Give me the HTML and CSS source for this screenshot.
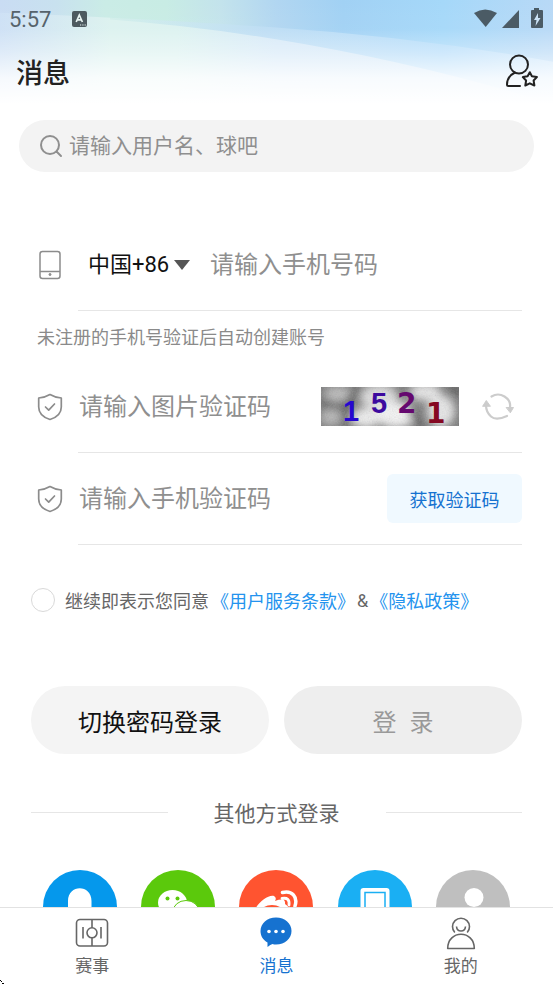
FILE: index.html
```html
<!DOCTYPE html>
<html lang="zh-CN">
<head>
<meta charset="utf-8">
<meta name="viewport" content="width=device-width, initial-scale=1">
<title>消息</title>
<link rel="stylesheet" href="styles.css">
</head>
<body>
<div class="app">
  <header class="header">
    <svg class="header-art" viewBox="0 0 553 106" preserveAspectRatio="none" aria-hidden="true">
      <defs>
        <linearGradient id="hue" x1="0" x2="1" y1="0" y2="0">
          <stop offset="0" stop-color="#c9dcf3"/>
          <stop offset=".1" stop-color="#c8e1ef"/>
          <stop offset=".19" stop-color="#caece6"/>
          <stop offset=".3" stop-color="#c8ece4"/>
          <stop offset=".4" stop-color="#c3e3ec"/>
          <stop offset=".5" stop-color="#b1d6f1"/>
          <stop offset=".62" stop-color="#a1d1f4"/>
          <stop offset=".8" stop-color="#a5d8f9"/>
          <stop offset="1" stop-color="#b8d9f6"/>
        </linearGradient>
        <linearGradient id="pale" x1="0" x2="1" y1="0" y2="0">
          <stop offset="0" stop-color="#cde0f5"/>
          <stop offset=".2" stop-color="#dcf2ef"/>
          <stop offset=".32" stop-color="#dcf2f0"/>
          <stop offset=".5" stop-color="#d6e9f8"/>
          <stop offset="1" stop-color="#d2e8fa"/>
        </linearGradient>
        <linearGradient id="mid" x1="0" x2="1" y1="0" y2="0">
          <stop offset="0" stop-color="#d3efea"/>
          <stop offset=".35" stop-color="#bdddf4"/>
          <stop offset=".75" stop-color="#b3dcfa"/>
          <stop offset="1" stop-color="#cde6fb"/>
        </linearGradient>
        <linearGradient id="fade" x1="0" x2="0" y1="0" y2="1">
          <stop offset="0" stop-color="#fff" stop-opacity="0"/>
          <stop offset=".28" stop-color="#fff" stop-opacity=".04"/>
          <stop offset=".5" stop-color="#fff" stop-opacity=".35"/>
          <stop offset=".75" stop-color="#fff" stop-opacity=".82"/>
          <stop offset="1" stop-color="#fff"/>
        </linearGradient>
      </defs>
      <path fill="url(#pale)" d="M0 0H553V106H0Z"/>
      <path fill="url(#mid)" d="M110 0H553V106Q420 64 276 40Q190 26 110 20Z"/>
      <path fill="url(#hue)" d="M0 0H553V63Q420 38 276 28Q130 18 0 13Z"/>
      <path fill="url(#fade)" d="M0 0H553V106H0Z"/>
    </svg>
    <div class="status">
      <span class="clock">5:57</span>
      <svg class="status-app" width="16" height="16" viewBox="0 0 16 16" aria-hidden="true">
        <rect width="15" height="16" rx="2" fill="#4d5a60"/>
        <path d="M4.2 11 7.3 4 10.4 11M5.4 8.8H9.2" fill="none" stroke="#e9f5f3" stroke-width="1.7"/>
        <path d="M8 14h1.2M10.3 14h1.2M12.6 14h1.2" stroke="#e9f5f3" stroke-width="1.2"/>
      </svg>
      <svg class="status-signals" width="70" height="22" viewBox="0 0 70 22" fill="#4b5b65" aria-hidden="true">
        <path d="M0 5Q11-2 23 5L11.700 19Z"/>
        <path d="M45 2V20H28Z"/>
        <path d="M60 0h5v2h3q1 0 1 1v16q0 1-1 1H58q-1 0-1-1V3q0-1 1-1h2Z"/>
        <path d="M64 5 60 12h2.500l-1 6 5-8H64Z" fill="#cbe3f6"/>
      </svg>
    </div>
    <div class="titlebar">
      <h1>消息</h1>
      <button class="icon-button" type="button" aria-label="关注的人">
        <svg width="34" height="34" viewBox="0 0 34 34" fill="none" stroke="#222" stroke-width="2" stroke-linecap="round" stroke-linejoin="round" aria-hidden="true">
          <circle cx="14" cy="10.500" r="9"/>
          <path d="M10 18.500C5 21 2 25.500 2 30.500Q2 32 3.500 32H15"/>
          <path d="M24.800 18.200 26.900 22.300 31.900 23.100 28.600 26.500 29.400 31.500 24.800 29.300 20.300 31.500 21.100 26.500 17.800 23.100 22.600 22.300Z"/>
        </svg>
      </button>
    </div>
  </header>

  <main class="content">
    <label class="search">
      <svg width="24" height="24" viewBox="0 0 24 24" fill="none" stroke="#8f8f8f" stroke-width="2" stroke-linecap="round" aria-hidden="true">
        <circle cx="11" cy="11" r="9"/><path d="M17.500 17.500 22 22"/>
      </svg>
      <input type="search" placeholder="请输入用户名、球吧" aria-label="搜索">
    </label>

    <form class="login">
      <div class="row">
        <svg class="row-icon" width="22" height="30" viewBox="0 0 22 30" fill="none" stroke="#8c8c8c" stroke-width="1.500" aria-hidden="true">
          <rect x="1" y="1.500" width="20" height="27" rx="2.500"/><path d="M1 21.500H21"/><circle cx="11" cy="24.500" r="1" fill="#8c8c8c" stroke-width="1"/>
        </svg>
        <div class="field phone">
          <select aria-label="国家和地区"><option>中国+86</option></select>
          <svg class="caret" width="16" height="10" viewBox="0 0 16 10" aria-hidden="true"><path d="M0 0H16L8 10Z" fill="#555"/></svg>
          <input type="tel" placeholder="请输入手机号码" aria-label="手机号码">
        </div>
      </div>
      <p class="hint">未注册的手机号验证后自动创建账号</p>
      <div class="row">
        <svg class="row-icon" width="26" height="28" viewBox="0 0 26 28" fill="none" stroke="#8c8c8c" stroke-width="1.700" stroke-linecap="round" stroke-linejoin="round" aria-hidden="true">
          <path d="M13 1.500Q18 4.500 24.300 5V14C24.300 20 19.500 24.500 13 26.500C6.500 24.500 1.700 20 1.700 14V5Q8 4.500 13 1.500Z"/><path d="M8.500 14 11.700 17.200 17.500 11"/>
        </svg>
        <div class="field">
          <input type="text" placeholder="请输入图片验证码" aria-label="图片验证码">
          <svg class="captcha" width="138" height="39" viewBox="0 0 138 39" role="img" aria-label="图片验证码">
            <defs>
              <filter id="soft" x="-30%" y="-30%" width="160%" height="160%"><feGaussianBlur stdDeviation="4"/></filter>
              <filter id="grain" x="0" y="0" width="100%" height="100%"><feTurbulence type="fractalNoise" baseFrequency=".7" numOctaves="2" seed="4"/><feColorMatrix type="saturate" values=".2"/></filter>
              <clipPath id="frame"><rect width="138" height="39"/></clipPath>
            </defs>
            <g clip-path="url(#frame)">
              <rect width="138" height="39" fill="#777"/>
              <g filter="url(#soft)">
                <ellipse cx="17" cy="7" rx="14" ry="8" fill="#bbb"/>
                <ellipse cx="10" cy="30" rx="11" ry="9" fill="#b5b5b5"/>
                <ellipse cx="58" cy="10" rx="19" ry="13" fill="#ddd"/>
                <ellipse cx="45" cy="31" rx="15" ry="10" fill="#eee"/>
                <ellipse cx="75" cy="28" rx="20" ry="13" fill="#f4f4f4"/>
                <ellipse cx="104" cy="5" rx="16" ry="9" fill="#e6e6e6"/>
                <ellipse cx="120" cy="24" rx="14" ry="16" fill="#e6e6e6"/>
                <path d="M39 0 25 17 25 39M0 16 20 20M130 0 138 8M88 22 100 39" stroke="#444" stroke-width="6" fill="none"/>
              </g>
              <rect width="138" height="39" filter="url(#grain)" opacity=".25"/>
            </g>
            <g class="captcha-text">
              <text x="22" y="34" fill="#2607cf">1</text>
              <text x="50" y="26" fill="#3d0a9e">5</text>
              <text class="heavy" x="76" y="26" fill="#65096f">2</text>
              <text class="heavy" x="105" y="36" fill="#850822">1</text>
            </g>
          </svg>
          <button class="refresh" type="button" aria-label="换一张">
            <svg width="32" height="28" viewBox="0 0 32 28" fill="none" stroke="#ccc" stroke-width="2.200" stroke-linecap="round" aria-hidden="true">
              <path d="M9.500 3.500Q16-.5 22.500 3.500T28 14M4 12Q4 19 9 23.500T25 23"/>
              <path d="M24.500 14.500H31.500L28.500 19.500ZM.8 13 4.300 7.500 8.200 13Z" fill="#ccc" stroke-width="1"/>
            </svg>
          </button>
        </div>
      </div>
      <div class="row">
        <svg class="row-icon" width="26" height="28" viewBox="0 0 26 28" fill="none" stroke="#8c8c8c" stroke-width="1.700" stroke-linecap="round" stroke-linejoin="round" aria-hidden="true">
          <path d="M13 1.500Q18 4.500 24.300 5V14C24.300 20 19.500 24.500 13 26.500C6.500 24.500 1.700 20 1.700 14V5Q8 4.500 13 1.500Z"/><path d="M8.500 14 11.700 17.200 17.500 11"/>
        </svg>
        <div class="field">
          <input type="text" placeholder="请输入手机验证码" aria-label="手机验证码">
          <button class="send-code" type="button">获取验证码</button>
        </div>
      </div>
      <div class="agree">
        <input id="agree" type="checkbox">
        <label for="agree">继续即表示您同意</label>
        <a href="#terms">《用户服务条款》</a>
        <span>&amp;</span>
        <a href="#privacy">《隐私政策》</a>
      </div>
      <div class="actions">
        <button class="pill" type="button">切换密码登录</button>
        <button class="pill pill-off" type="submit" disabled><span>登</span><span>录</span></button>
      </div>
    </form>

    <section class="others">
      <h2>其他方式登录</h2>
      <div class="socials">
        <button class="social" type="button" aria-label="QQ">
          <svg viewBox="0 0 74 74" aria-hidden="true"><circle cx="37" cy="37" r="37" fill="#0598ec"/><path fill="#fff" d="M25 38V31C25 14 48.500 14 48.500 31V38Q54 46 52 52L48 50Q44 58 37 58T26 50L22 52Q20 46 25 38Z"/></svg>
        </button>
        <button class="social" type="button" aria-label="微信">
          <svg viewBox="0 0 74 74" aria-hidden="true"><circle cx="37" cy="37" r="37" fill="#5bc90c"/><ellipse cx="31.500" cy="32.500" rx="14.500" ry="12.500" fill="#fff"/><circle cx="26.500" cy="28.500" r="2" fill="#5bc90c"/><circle cx="36.500" cy="28.500" r="2" fill="#5bc90c"/><ellipse cx="45" cy="41.500" rx="13" ry="11" fill="#fff" stroke="#5bc90c"/></svg>
        </button>
        <button class="social" type="button" aria-label="微博">
          <svg viewBox="0 0 74 74" aria-hidden="true"><circle cx="37" cy="37" r="37" fill="#ff5430"/><path fill="#fff" d="M16 40C18 33 30 24 35 26Q38 28 36 31Q47 27 46 34Q54 39 48 46C39 57 16 55 16 44Z"/><ellipse cx="33" cy="43" rx="12" ry="8" fill="#ff5430"/><g fill="none" stroke="#fff" stroke-linecap="round"><path d="M43.500 22.500C53 20 59 27 56 36" stroke-width="3.500"/><path d="M43 28.500Q51 27 50 35" stroke-width="2.800"/></g></svg>
        </button>
        <button class="social" type="button" aria-label="手机">
          <svg viewBox="0 0 74 74" aria-hidden="true"><circle cx="37" cy="37" r="37" fill="#1aaff3"/><rect x="22.500" y="18" width="29" height="42" rx="3" fill="#fff"/><rect x="27" y="22.500" width="20" height="27" fill="#fff" stroke="#1aaff3" stroke-width="1.500"/></svg>
        </button>
        <button class="social" type="button" aria-label="账号">
          <svg viewBox="0 0 74 74" aria-hidden="true"><circle cx="37" cy="37" r="37" fill="#bfbfbf"/><circle cx="38" cy="27.500" r="9.500" fill="#fff"/><path fill="#fff" d="M20 55Q20 38 38 38T56 55Z"/></svg>
        </button>
      </div>
    </section>
  </main>

  <nav class="tabs">
    <a class="tab" href="#games">
      <svg width="34" height="34" viewBox="0 0 34 34" fill="none" stroke="#666" stroke-width="1.600" aria-hidden="true">
        <rect x="1.500" y="3.500" width="31" height="26.500" rx="3.500"/><circle cx="17" cy="16.800" r="5"/><path d="M17 3.500V11.800M17 21.800V30M8 11V22.500M26 11V22.500"/>
      </svg>
      <span>赛事</span>
    </a>
    <a class="tab tab-on" href="#messages" aria-current="page">
      <svg width="34" height="34" viewBox="0 0 34 34" aria-hidden="true">
        <path fill="#1672d0" d="M17 1.500C26 1.500 32.500 7.500 32.500 15S26 28.500 17 28.500Q15 28.500 13.500 28Q11.500 28.500 8.500 31V26.500C4 24 1.500 20 1.500 15C1.500 7.500 8 1.500 17 1.500Z"/>
        <g fill="#fff"><circle cx="10" cy="15.500" r="1.800"/><circle cx="17" cy="15.500" r="1.800"/><circle cx="24" cy="15.500" r="1.800"/></g>
      </svg>
      <span>消息</span>
    </a>
    <a class="tab" href="#mine">
      <svg width="34" height="34" viewBox="0 0 34 34" fill="none" stroke="#666" stroke-width="1.600" aria-hidden="true">
        <path d="M10.800 16.500A8.500 8.500 0 1 1 23.200 16.500"/><path d="M12.500 10.500C13 16.500 21 16.500 21.500 10.500"/><path d="M3.700 32.500C3.700 13.500 30.300 13.500 30.300 32.500Z" stroke-linejoin="round"/>
      </svg>
      <span>我的</span>
    </a>
    <svg class="pointer" width="4" height="4" viewBox="0 0 4 4" aria-hidden="true"><path d="M0 0H1V1H2V2H1V1H0ZM2 3H4V4H2Z"/></svg>
  </nav>
</div>
</body>
</html>
```

FILE: styles.css
```css
* {
  box-sizing: border-box;
}

body {
  margin: 0;
  background: #fff;
  color: #222;
  font-family: Roboto, "Noto Sans CJK SC", sans-serif;
}

button,
input,
select {
  margin: 0;
  padding: 0;
  border: 0;
  background: none;
  color: inherit;
  font: inherit;
}

a {
  color: #2493ee;
  text-decoration: none;
}

svg {
  display: block;
  flex: none;
}

.app {
  display: flex;
  flex-direction: column;
  height: 100vh;
}

/* Header */
.header {
  position: relative;
  flex: none;
}

.header-art {
  position: absolute;
  inset: 0;
  z-index: -1;
  width: 100%;
  height: 100%;
}

.status {
  display: flex;
  align-items: center;
  height: 38px;
  padding: 0 9px;
  color: #56636b;
  font-size: 22px;
}

.status-app {
  margin-left: 21px;
}

.status-signals {
  margin-left: auto;
}

.titlebar {
  display: flex;
  align-items: center;
  justify-content: space-between;
  height: 66px;
  padding: 0 14px 0 16px;
}

h1 {
  margin: 0;
  font-size: 27px;
  font-weight: 500;
}

/* Content */
.content {
  flex: 1;
  min-height: 0;
  overflow: hidden;
  padding-top: 16px;
}

.search {
  display: flex;
  align-items: center;
  gap: 6px;
  height: 52px;
  margin: 0 19px;
  padding: 0 20px;
  border-radius: 26px;
  background: #f3f3f3;
  font-size: 21px;
}

input {
  flex: 1;
  width: 0;
  min-width: 0;
  appearance: none;
  outline: none;
}

input::placeholder {
  color: #8f8f8f;
  opacity: 1;
}

.login {
  margin-top: 47px;
  padding: 0 31px;
}

.row {
  display: grid;
  grid-template-columns: 38px minmax(0, 1fr);
  column-gap: 9px;
  align-items: center;
  height: 92px;
  font-size: 24px;
}

.row-icon {
  justify-self: center;
}

.field {
  display: flex;
  align-items: center;
  height: 92px;
  padding-left: 1px;
  border-bottom: 1px solid #e6e6e6;
}

.phone {
  padding-left: 10px;
}

.phone select {
  appearance: none;
  color: #111;
  font-size: 22px;
}

.caret {
  margin: 0 20px 0 4px;
}

.hint {
  display: flex;
  align-items: center;
  height: 50px;
  margin: 0;
  padding-left: 6px;
  color: #8a8a8a;
  font-size: 18px;
}

.captcha {
  overflow: visible;
}

.captcha-text {
  font: 700 29px "Liberation Sans", sans-serif;
}

.captcha-text .heavy {
  font: 700 28px "DejaVu Sans", sans-serif;
}

.refresh {
  margin: 0 8px 0 23px;
}

.send-code {
  width: 135px;
  height: 49px;
  border-radius: 6px;
  background: #f0f9ff;
  color: #1672d0;
  font-size: 18px;
}

.agree {
  display: flex;
  align-items: center;
  gap: 2px;
  height: 110px;
  color: #666;
  font-size: 18px;
}

.agree input {
  flex: none;
  width: 24px;
  height: 24px;
  margin-right: 8px;
  border: 1px solid #d9d9d9;
  border-radius: 50%;
}

.actions {
  display: flex;
  gap: 15px;
  margin-top: 31px;
}

.pill {
  flex: 1;
  height: 68px;
  border-radius: 34px;
  background: #f4f4f4;
  color: #111;
  font-size: 24px;
}

.pill-off {
  display: flex;
  align-items: center;
  justify-content: center;
  gap: 13px;
  background: #eee;
  color: #999;
}

.others {
  padding: 0 31px;
}

h2 {
  display: flex;
  align-items: center;
  gap: 46px;
  height: 116px;
  margin: 0;
  color: #666;
  font-size: 21px;
  font-weight: 400;
}

h2::before,
h2::after {
  flex: 1;
  height: 1px;
  background: #e6e6e6;
  content: "";
}

.socials {
  display: flex;
  justify-content: space-around;
}

.social {
  width: 74px;
  height: 74px;
}

/* Bottom tabs */
.tabs {
  position: relative;
  display: flex;
  flex: none;
  height: 77px;
  border-top: 1px solid #e2e2e2;
  background: #fff;
}

.tab {
  display: flex;
  flex: 1;
  flex-direction: column;
  align-items: center;
  gap: 4px;
  padding-top: 8px;
  color: #666;
  font-size: 17px;
  line-height: 24px;
}

.tab-on {
  color: #1672d0;
}

.pointer {
  position: absolute;
  bottom: 0;
  left: 0;
}
```
